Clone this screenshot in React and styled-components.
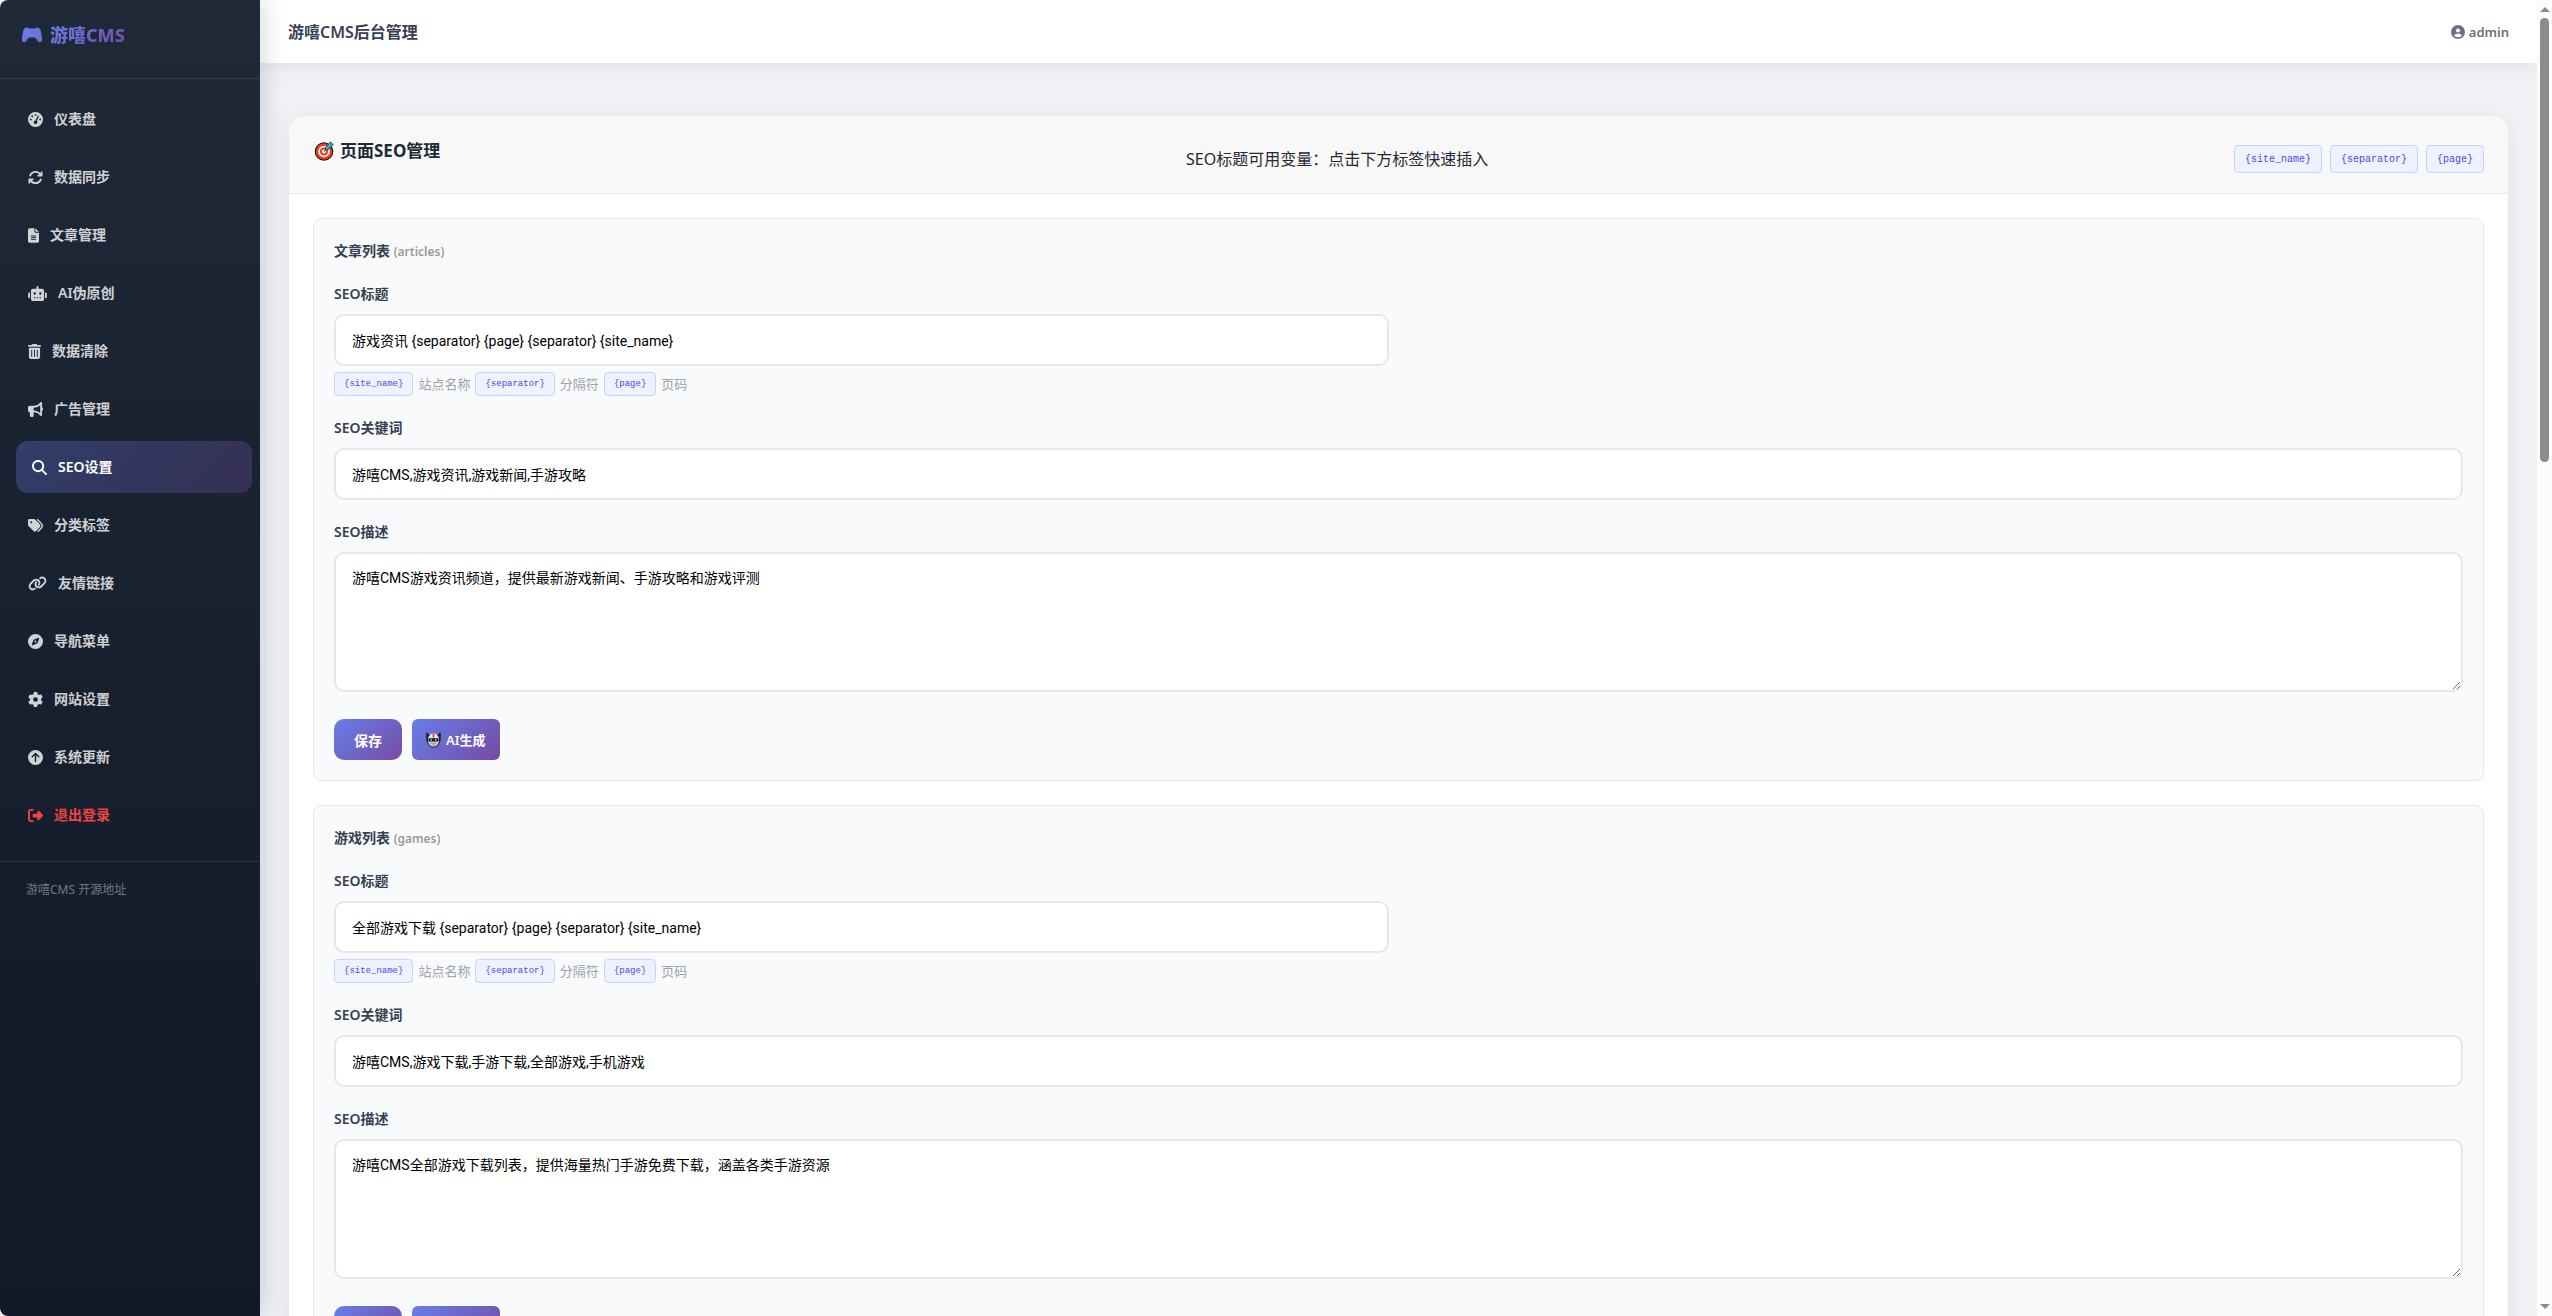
import React from 'react'
import styled, { createGlobalStyle, css } from 'styled-components'
import {
  FaArrowsRotate,
  FaBullhorn,
  FaCircleArrowUp,
  FaCircleUser,
  FaCompass,
  FaFileLines,
  FaGaugeHigh,
  FaGear,
  FaLink,
  FaMagnifyingGlass,
  FaRightFromBracket,
  FaRobot,
  FaTags,
  FaTrashCan,
} from 'react-icons/fa6'

const brandGradient = 'linear-gradient(135deg, #667eea 0%, #764ba2 100%)'

const GlobalStyle = createGlobalStyle`
  *, *::before, *::after {
    box-sizing: border-box;
  }

  body {
    margin: 0;
    background: #fff;
    color: #1f2937;
    font-family: 'Noto Sans', 'Noto Sans CJK SC', sans-serif;
    font-size: 16px;
    line-height: 24px;
  }

  h1, h2, h3, p {
    margin: 0;
  }

  button, input, textarea {
    font-family: inherit;
  }
`

const Layout = styled.div`
  display: grid;
  grid-template-columns: 260px minmax(0, 1fr) 15px;
  height: 100vh;
  overflow: hidden;
`

/* sidebar */

const Sidebar = styled.aside`
  position: relative;
  z-index: 2;
  border-radius: 8px 0 0 8px;
  background: linear-gradient(180deg, #1f2937 0%, #111827 100%);
  box-shadow: 4px 0 24px rgba(0, 0, 0, 0.15);
`

const Brand = styled.div`
  display: flex;
  align-items: flex-start;
  gap: 8px;
  height: 79px;
  padding: 23px 22px;
  border-bottom: 1px solid rgba(255, 255, 255, 0.1);

  svg {
    width: 20px;
    height: 24px;
  }
`

const BrandName = styled.span`
  background: ${brandGradient};
  background-clip: text;
  color: transparent;
  font-size: 18px;
  font-weight: 800;
`

const Nav = styled.nav`
  display: flex;
  flex-direction: column;
  gap: 6px;
  padding: 14px 12px 20px;
`

const NavLink = styled.a`
  display: flex;
  align-items: center;
  gap: 11px;
  height: 52px;
  padding: 0 16px;
  border-radius: 12px;
  color: ${(props) => (props.$danger ? '#ef4444' : 'rgba(255, 255, 255, 0.8)')};
  font-size: 14px;
  font-weight: 600;
  text-decoration: none;

  svg {
    width: ${(props) => props.$iconWidth}px;
    height: 15px;
  }

  ${(props) =>
    props.$active &&
    css`
      background: linear-gradient(135deg, rgba(102, 126, 234, 0.3), rgba(118, 75, 162, 0.3));
      color: #fff;
      transform: translateX(4px);
    `}
`

const SidebarFooter = styled.div`
  padding: 16px 26px;
  border-top: 1px solid rgba(255, 255, 255, 0.1);
  font-size: 12px;

  a {
    color: rgba(255, 255, 255, 0.4);
    text-decoration: none;
  }
`

/* main column */

const Main = styled.main`
  min-width: 0;
  overflow: hidden;
  background: #f1f2f6;
`

const TopBar = styled.header`
  position: relative;
  display: flex;
  align-items: center;
  justify-content: space-between;
  height: 63px;
  padding: 0 28px;
  background: #fff;
  box-shadow: 0 2px 20px rgba(0, 0, 0, 0.08);
`

const PageTitle = styled.h1`
  color: #374151;
  font-size: 16px;
  font-weight: 600;
`

const User = styled.div`
  display: flex;
  align-items: center;
  gap: 4px;
  color: #6b7280;
  font-size: 13px;
  font-weight: 600;

  svg {
    width: 14px;
    height: 14px;
  }
`

const Content = styled.div`
  padding: 53px 29px;
`

const Card = styled.section`
  overflow: hidden;
  border-radius: 16px;
  background: #fff;
`

const CardShadow = styled.div`
  border-radius: 16px;
  box-shadow: 0 4px 24px rgba(0, 0, 0, 0.08);
`

const CardHeader = styled.div`
  display: flex;
  align-items: center;
  justify-content: space-between;
  padding: 24px 24px 15px;
  border-bottom: 1px solid #e5e7eb;
  background: #f8f8f8;
`

const CardTitle = styled.h2`
  display: flex;
  align-items: center;
  gap: 5px;
  margin-bottom: 16px;
  font-size: 17px;
  font-weight: 700;
  line-height: 22px;
`

const TagGroup = styled.div`
  display: flex;
  gap: 8px;
`

const Tag = styled.button`
  height: ${(props) => (props.$small ? 24 : 28)}px;
  padding: 0 ${(props) => (props.$small ? 9 : 10)}px;
  border: 1px solid #c7d2fe;
  border-radius: 4px;
  background: #eef2ff;
  color: #4f46e5;
  font-family: 'Liberation Mono', monospace;
  font-size: ${(props) => (props.$small ? 9 : 10)}px;
  cursor: pointer;
`

const CardBody = styled.div`
  display: flex;
  flex-direction: column;
  gap: 24px;
  padding: 24px;
`

const SeoForm = styled.form`
  padding: 20px;
  border: 1px solid #e5e7eb;
  border-radius: 8px;
  background: #f9fafc;
`

const FormTitle = styled.h3`
  margin-bottom: 18px;
  color: #374151;
  font-size: 14px;
  font-weight: 600;

  small {
    color: #999;
    font-size: 12px;
  }
`

const Field = styled.div`
  margin-bottom: 20px;
`

const HalfRow = styled.div`
  display: grid;
  grid-template-columns: 1fr 1fr;
  gap: 20px;
`

const Label = styled.label`
  display: block;
  margin-bottom: 8px;
  color: #374151;
  font-size: 14px;
  font-weight: 600;
`

const control = css`
  display: block;
  width: 100%;
  border: 2px solid #e5e7eb;
  border-radius: 10px;
  background: #fff;
  color: #000;
  font-family: Roboto, 'Noto Sans CJK SC', sans-serif;
  font-size: 14px;
  line-height: 24px;
`

const Input = styled.input`
  ${control}
  height: 52px;
  padding: 0 16px;
`

const TextArea = styled.textarea`
  ${control}
  height: 140px;
  padding: 12px 16px;
  resize: vertical;
`

const Hints = styled.div`
  display: flex;
  align-items: center;
  gap: 5px;
  margin-top: 6px;
  color: #9ca3af;
  font-size: 13px;
`

const Actions = styled.div`
  display: flex;
  gap: 10px;
  padding-top: 7px;
`

const Button = styled.button`
  display: flex;
  align-items: center;
  gap: 5px;
  height: 41px;
  padding: 0 ${(props) => (props.$compact ? 14 : 20)}px;
  border: 0;
  border-radius: ${(props) => (props.$compact ? 6 : 10)}px;
  background: ${brandGradient};
  color: #fff;
  font-size: ${(props) => (props.$compact ? 13 : 14)}px;
  font-weight: 600;
  white-space: nowrap;
  cursor: pointer;
`

/* scroll bar */

const ScrollTrack = styled.div`
  display: flex;
  flex-direction: column;
  align-items: center;
  padding: 7px 0;
  background: #fcfcfc;
`

const ScrollArrow = styled.span`
  border: 5px solid transparent;
  border-top-width: ${(props) => (props.$down ? 5 : 0)}px;
  border-bottom-width: ${(props) => (props.$down ? 0 : 5)}px;
  border-top-color: #8b8b8b;
  border-bottom-color: #8b8b8b;
`

const ScrollRail = styled.div`
  display: grid;
  flex: 1;
  grid-template-rows: 35fr 66fr;
  width: 9px;
  margin: 6px 0;
`

const ScrollThumb = styled.div`
  border-radius: 5px;
  background: #8b8b8b;
`

const GamepadIcon = () => (
  <svg viewBox="0 0 20 24" aria-hidden="true">
    <defs>
      <linearGradient id="pad" x1="0" y1="0" x2="1" y2="1">
        <stop offset="0" stopColor="#667eea" />
        <stop offset="1" stopColor="#6b6fd4" />
      </linearGradient>
    </defs>
    <path
      fill="url(#pad)"
      d="M5 4.6c1 0 1.600.7 2.400.9h5.200c.8-.2 1.400-.9 2.400-.9 2.200 0 3.300 1.400 3.900 3.800.7 2.700 1.100 5.600 1.100 7.600 0 1.800-.7 3.200-2.200 3.200-1.300 0-2-.9-2.800-2.200-.9-1.500-1.300-2.400-2.600-2.400H7.600c-1.300 0-1.700.9-2.600 2.400-.8 1.300-1.500 2.200-2.800 2.200C.7 19.200 0 17.800 0 16c0-2 .4-4.900 1.100-7.600C1.700 6 2.800 4.600 5 4.600z"
    />
  </svg>
)

const TargetIcon = () => (
  <svg width="22" height="20" viewBox="-1 0 22 20" aria-hidden="true">
    <circle cx="10" cy="10.500" r="9.300" fill="#1c1210" />
    <circle cx="10" cy="10.500" r="8.200" fill="#f03a17" />
    <circle cx="10" cy="10.500" r="5.800" fill="#fff" />
    <circle cx="10" cy="10.500" r="4" fill="#f03a17" />
    <circle cx="10" cy="10.500" r="2" fill="#fff" />
    <path d="M10 10.500l4-4" stroke="#4b7893" strokeWidth="1.400" />
    <path d="M11.600 6.500L16.600.8l.8 1.800 2 .8-5.500 5.300-2.400.2z" fill="#35c3ee" stroke="#17232b" strokeWidth=".8" />
    <path d="M12 8.500l5.400-5.900" stroke="#1689b5" strokeWidth=".8" />
  </svg>
)

const RobotIcon = () => (
  <svg width="15" height="16" viewBox="0 0 15 16" aria-hidden="true">
    <path d="M.2.8h1.600l1.600 2.800h8.200L13.200.8h1.600v6.400c0 1.600-.6 2.600-1.200 3.600-.7 3-2.900 4.800-6.100 4.800s-5.400-1.800-6.100-4.800C.8 9.800.2 8.800.2 7.200z" fill="#222" />
    <path d="M2.300 4.600h10.400v4.600c0 3.400-2.200 5.400-5.200 5.400s-5.200-2-5.200-5.400z" fill="#d2d2d2" />
    <path d="M3 5.600C3.400 2.800 5.200 1.200 7.500 1.200s4.100 1.600 4.500 4.400z" fill="#f1f1f1" />
    <path d="M6.600 1.300h1.800v4.100H6.600z" fill="#e5372a" />
    <rect x="2.800" y="6.200" width="9.400" height="3.200" rx="1" fill="#111" />
    <circle cx="5.200" cy="7.800" r="1.100" fill="#25c8f2" />
    <circle cx="9.800" cy="7.800" r="1.100" fill="#25c8f2" />
    <path d="M4.600 11.400h5.800M5.400 12.900h4.200" stroke="#888" strokeWidth=".7" />
  </svg>
)

const navItems = [
  { label: '仪表盘', icon: FaGaugeHigh },
  { label: '数据同步', icon: FaArrowsRotate },
  { label: '文章管理', icon: FaFileLines, iconWidth: 11 },
  { label: 'AI伪原创', icon: FaRobot, iconWidth: 19 },
  { label: '数据清除', icon: FaTrashCan, iconWidth: 13 },
  { label: '广告管理', icon: FaBullhorn },
  { label: 'SEO设置', icon: FaMagnifyingGlass, active: true },
  { label: '分类标签', icon: FaTags },
  { label: '友情链接', icon: FaLink, iconWidth: 19 },
  { label: '导航菜单', icon: FaCompass },
  { label: '网站设置', icon: FaGear },
  { label: '系统更新', icon: FaCircleArrowUp },
  { label: '退出登录', icon: FaRightFromBracket, danger: true },
]

const variables = [
  { code: '{site_name}', label: '站点名称' },
  { code: '{separator}', label: '分隔符' },
  { code: '{page}', label: '页码' },
]

const pages = [
  {
    id: 'articles',
    name: '文章列表',
    title: '游戏资讯 {separator} {page} {separator} {site_name}',
    keywords: '游嘻CMS,游戏资讯,游戏新闻,手游攻略',
    description: '游嘻CMS游戏资讯频道，提供最新游戏新闻、手游攻略和游戏评测',
  },
  {
    id: 'games',
    name: '游戏列表',
    title: '全部游戏下载 {separator} {page} {separator} {site_name}',
    keywords: '游嘻CMS,游戏下载,手游下载,全部游戏,手机游戏',
    description: '游嘻CMS全部游戏下载列表，提供海量热门手游免费下载，涵盖各类手游资源',
  },
]

const PageSeo = ({ id, name, title, keywords, description }) => (
  <SeoForm>
    <FormTitle>
      {name} <small>({id})</small>
    </FormTitle>
    <Field>
      <Label htmlFor={`${id}-title`}>SEO标题</Label>
      <HalfRow>
        <Input id={`${id}-title`} type="text" defaultValue={title} />
      </HalfRow>
      <Hints>
        {variables.map((item) => (
          <React.Fragment key={item.code}>
            <Tag type="button" $small>
              {item.code}
            </Tag>
            <span>{item.label}</span>
          </React.Fragment>
        ))}
      </Hints>
    </Field>
    <Field>
      <Label htmlFor={`${id}-keywords`}>SEO关键词</Label>
      <Input id={`${id}-keywords`} type="text" defaultValue={keywords} />
    </Field>
    <Field>
      <Label htmlFor={`${id}-description`}>SEO描述</Label>
      <TextArea id={`${id}-description`} defaultValue={description} />
    </Field>
    <Actions>
      <Button type="button">保存</Button>
      <Button type="button" $compact>
        <RobotIcon />
        AI生成
      </Button>
    </Actions>
  </SeoForm>
)

const App = () => (
  <>
    <GlobalStyle />
    <Layout>
      <Sidebar>
        <Brand>
          <GamepadIcon />
          <BrandName>游嘻CMS</BrandName>
        </Brand>
        <Nav>
          {navItems.map(({ label, icon: Icon, iconWidth = 15, active, danger }) => (
            <NavLink key={label} href="#" $iconWidth={iconWidth} $active={active} $danger={danger}>
              <Icon />
              {label}
            </NavLink>
          ))}
        </Nav>
        <SidebarFooter>
          <a href="#">游嘻CMS 开源地址</a>
        </SidebarFooter>
      </Sidebar>
      <Main>
        <TopBar>
          <PageTitle>游嘻CMS后台管理</PageTitle>
          <User>
            <FaCircleUser />
            admin
          </User>
        </TopBar>
        <Content>
          <CardShadow>
            <Card>
              <CardHeader>
                <CardTitle>
                  <TargetIcon />
                  页面SEO管理
                </CardTitle>
                <p>SEO标题可用变量：点击下方标签快速插入</p>
                <TagGroup>
                  {variables.map((item) => (
                    <Tag key={item.code} type="button">
                      {item.code}
                    </Tag>
                  ))}
                </TagGroup>
              </CardHeader>
              <CardBody>
                {pages.map((page) => (
                  <PageSeo key={page.id} {...page} />
                ))}
              </CardBody>
            </Card>
          </CardShadow>
        </Content>
      </Main>
      <ScrollTrack>
        <ScrollArrow />
        <ScrollRail>
          <ScrollThumb />
        </ScrollRail>
        <ScrollArrow $down />
      </ScrollTrack>
    </Layout>
  </>
)

export default App
